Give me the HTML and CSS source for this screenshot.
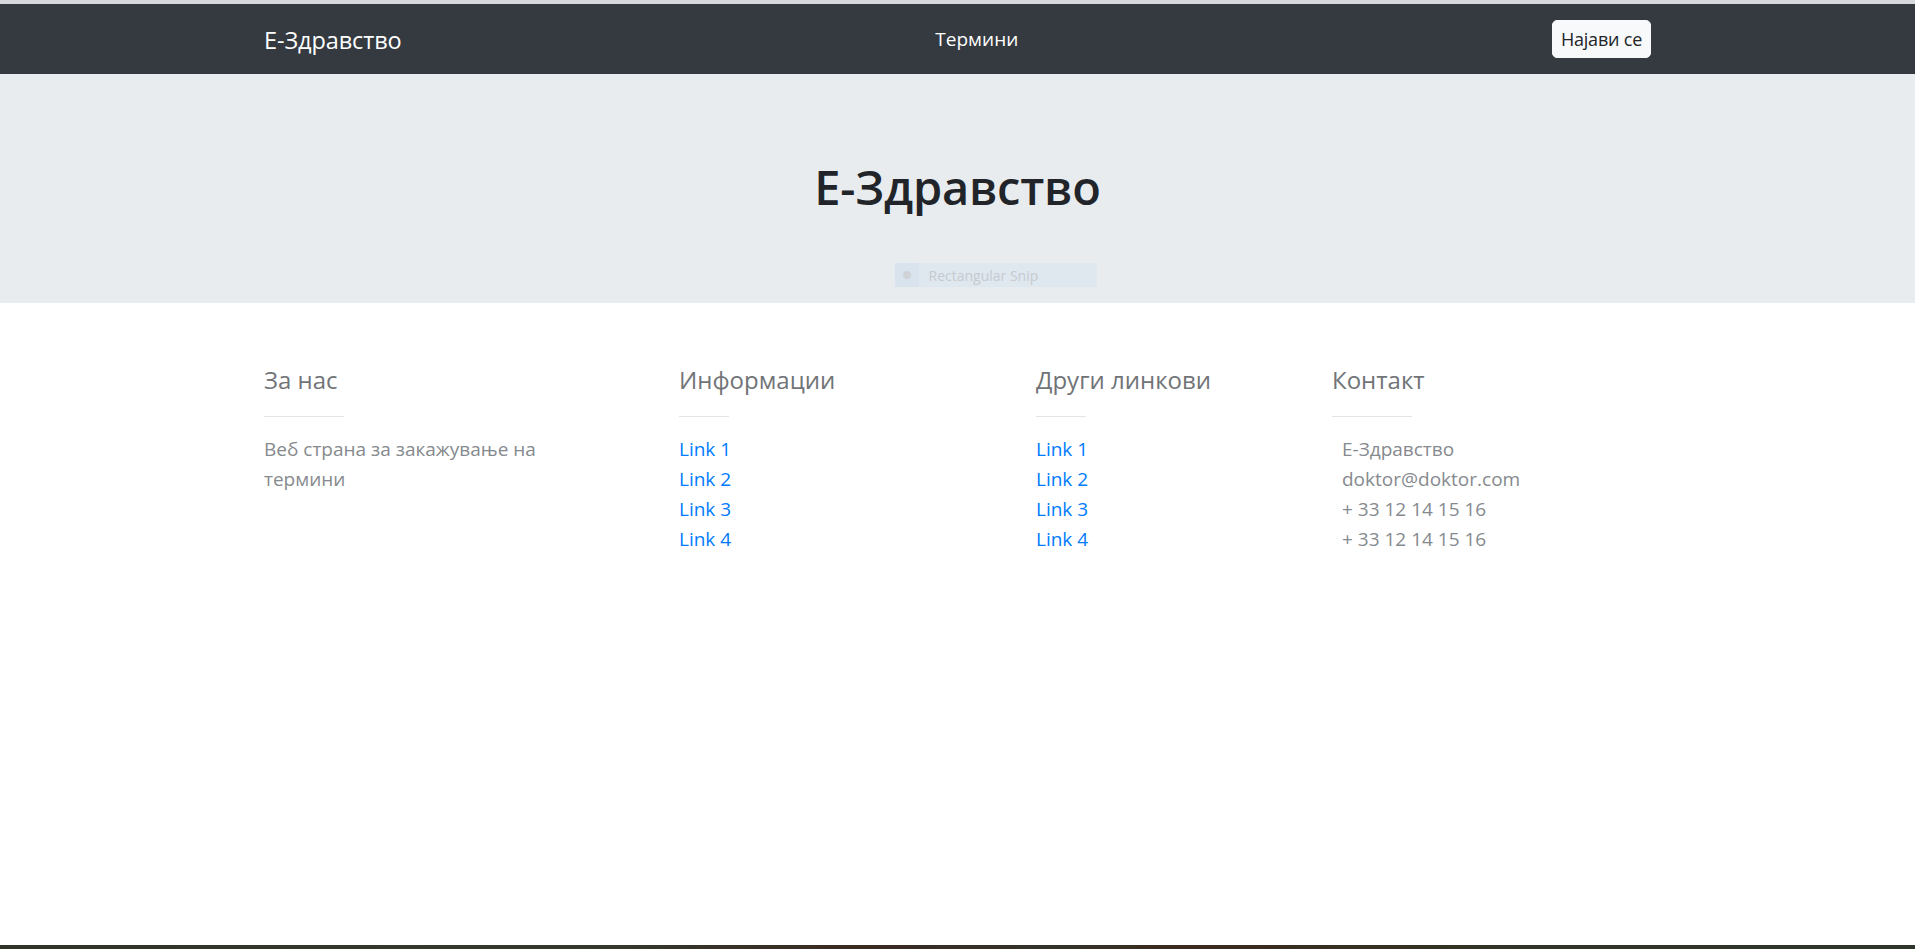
FILE: index.html
```html
<!DOCTYPE html>
<html lang="mk">
<head>
<meta charset="utf-8">
<title>Е-Здравство</title>
<link rel="stylesheet" href="styles.css">
</head>
<body>
<div class="page">
  <div class="top-strip"></div>
  <nav class="navbar">
    <div class="nav-inner">
      <a class="brand" href="#">Е-Здравство</a>
      <a class="nav-link" href="#">Термини</a>
      <button class="btn-login" type="button">Најави се</button>
    </div>
  </nav>
  <section class="hero">
    <h1 class="hero-title">Е-Здравство</h1>
    <div class="snip"><span class="snip-icon"><span class="snip-dot"></span></span><span class="snip-text">Rectangular Snip</span></div>
  </section>
  <footer class="footer">
    <div class="footer-inner">
      <div class="fcol">
        <h5 class="fhead">За нас</h5>
        <hr class="fhr wide">
        <p class="ftext about">Веб страна за закажување на термини</p>
      </div>
      <div class="fcol">
        <h5 class="fhead">Информации</h5>
        <hr class="fhr narrow">
        <ul class="flinks">
          <li><a href="#">Link 1</a></li>
          <li><a href="#">Link 2</a></li>
          <li><a href="#">Link 3</a></li>
          <li><a href="#">Link 4</a></li>
        </ul>
      </div>
      <div class="fcol">
        <h5 class="fhead">Други линкови</h5>
        <hr class="fhr narrow">
        <ul class="flinks">
          <li><a href="#">Link 1</a></li>
          <li><a href="#">Link 2</a></li>
          <li><a href="#">Link 3</a></li>
          <li><a href="#">Link 4</a></li>
        </ul>
      </div>
      <div class="fcol">
        <h5 class="fhead">Контакт</h5>
        <hr class="fhr wide">
        <ul class="fcontact">
          <li>Е-Здравство</li>
          <li>doktor@doktor.com</li>
          <li>+ 33 12 14 15 16</li>
          <li>+ 33 12 14 15 16</li>
        </ul>
      </div>
    </div>
  </footer>
  <div class="taskbar"></div>
</div>
</body>
</html>
```
FILE: styles.css
```css
* { box-sizing: border-box; }
html, body { margin: 0; padding: 0; }
body {
  font-family: "Open Sans", "Noto Sans", sans-serif;
  color: #212529;
  background: #fff;
}
.page {
  min-height: 100vh;
  display: flex;
  flex-direction: column;
}
.top-strip {
  height: 4px;
  background: #d6d8db;
}
.navbar {
  height: 70px;
  background: #343a40;
  display: flex;
}
.nav-inner {
  width: 1387px;
  margin: 0 auto;
  display: flex;
  align-items: center;
  justify-content: space-between;
}
.brand {
  color: #fff;
  font-size: 23.5px;
  line-height: 30px;
  letter-spacing: -0.1px;
  text-decoration: none;
  padding-top: 2px;
}
.nav-link {
  color: #fff;
  font-size: 19px;
  line-height: 30px;
  text-decoration: none;
}
.btn-login {
  width: 99px;
  height: 38px;
  background: #f8f9fa;
  color: #212529;
  border: 1px solid #f8f9fa;
  border-radius: 5px;
  font-family: inherit;
  font-size: 18px;
  line-height: 28px;
  padding: 0;
  white-space: nowrap;
  letter-spacing: -0.2px;
}
.hero {
  position: relative;
  height: 229px;
  background: #e9ecef;
  padding-top: 83px;
  text-align: center;
}
.hero-title {
  margin: 0;
  font-size: 47px;
  line-height: 60px;
  font-weight: 600;
  letter-spacing: -0.2px;
  color: #212529;
}
.snip {
  position: absolute;
  left: calc(50% - 63px);
  top: 189px;
  width: 202px;
  height: 24px;
  display: flex;
  align-items: center;
  background: #dfe7ef;
}
.snip-icon {
  width: 24px;
  height: 24px;
  background: #d9e3ed;
  display: flex;
  align-items: center;
  justify-content: center;
}
.snip-dot {
  width: 8px;
  height: 8px;
  border-radius: 50%;
  background: #cfd3d7;
}
.snip-text {
  margin-left: 10px;
  font-size: 14px;
  color: #c6cbd0;
}
.footer {
  padding-top: 62px;
}
.footer-inner {
  width: 1387px;
  margin: 0 auto;
  display: grid;
  grid-template-columns: 415px 357px 296px 1fr;
}
.fhead {
  margin: 0;
  font-size: 24px;
  line-height: 30px;
  font-weight: 500;
  color: #717477;
}
.fhr {
  margin: 21px 0 17px;
  border: 0;
  border-top: 1px solid #e5e5e5;
  height: 0;
}
.fhr.wide { width: 80px; }
.fhr.narrow { width: 50px; }
.ftext {
  margin: 0;
  font-size: 19px;
  line-height: 30px;
  color: #868a8e;
}
.ftext.about { max-width: 300px; }
.flinks, .fcontact {
  list-style: none;
  margin: 0;
  padding: 0;
  font-size: 19px;
  line-height: 30px;
}
.flinks a {
  color: #007bff;
  text-decoration: none;
}
.fcontact {
  padding-left: 10px;
  color: #868a8e;
}
.taskbar {
  margin-top: auto;
  height: 4px;
  background: linear-gradient(90deg, #2f3427 0%, #333a2c 30%, #3a2a22 45%, #33332a 55%, #3c2a1f 62%, #303527 80%, #2e352b 100%);
}
```
